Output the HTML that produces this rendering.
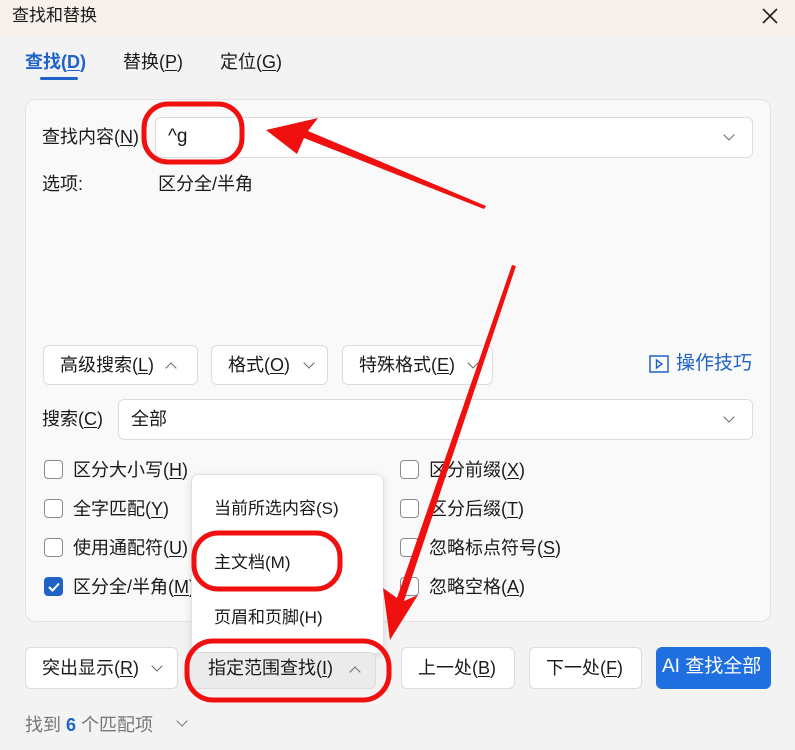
<!DOCTYPE html>
<html><head><meta charset="utf-8"><style>
*{box-sizing:border-box;margin:0;padding:0}
body{width:795px;height:750px;background:#f3f3f3;font-family:"Liberation Sans","Noto Sans CJK SC",sans-serif;color:#1a1a1a;position:relative;overflow:hidden;font-size:18px}
.a{position:absolute;white-space:nowrap}
.t{position:absolute;white-space:nowrap;line-height:20px}
.box{position:absolute;background:#fff;border:1px solid #dcdcdc;border-radius:6px}
.chev{position:absolute;width:8px;height:8px;border-right:1.5px solid #666;border-bottom:1.5px solid #666;transform:rotate(45deg)}
.up{transform:rotate(-135deg)}
.cb{position:absolute;width:19px;height:19px;border:1.5px solid #8a8a8a;border-radius:4px;background:#fff}
u{text-decoration:underline;text-underline-offset:2px}
</style></head><body>
<div class="a" style="left:0;top:0;width:795px;height:37px;background:#f7f0eb"></div>
<div class="t" style="left:12px;top:6px;font-size:17px">查找和替换</div>
<svg class="a" style="left:762px;top:8px" width="16" height="16"><path d="M1 1L15 15M15 1L1 15" stroke="#222" stroke-width="1.6"/></svg>

<div class="t" style="left:25px;top:52px;color:#1f63c9;font-weight:bold">查找(<u>D</u>)</div>
<div class="a" style="left:40px;top:77px;width:38px;height:3px;background:#1f63c9;border-radius:2px"></div>
<div class="t" style="left:123px;top:52px">替换(<u>P</u>)</div>
<div class="t" style="left:220px;top:52px">定位(<u>G</u>)</div>

<div class="a" style="left:25px;top:99px;width:746px;height:523px;background:#f9f9f9;border:1px solid #e3e3e3;border-radius:10px"></div>
<div class="t" style="left:42px;top:127px">查找内容(<u>N</u>)</div>
<div class="box" style="left:155px;top:117px;width:598px;height:41px"></div>
<div class="t" style="left:168px;top:127px;font-size:19px">^g</div>
<div class="chev" style="left:725px;top:131px"></div>
<div class="t" style="left:42px;top:174px">选项:</div>
<div class="t" style="left:158px;top:174px">区分全/半角</div>

<div class="box" style="left:43px;top:345px;width:155px;height:40px"></div>
<div class="t" style="left:60px;top:355px">高级搜索(<u>L</u>)</div>
<div class="chev up" style="left:167px;top:364px"></div>
<div class="box" style="left:211px;top:345px;width:117px;height:40px"></div>
<div class="t" style="left:228px;top:355px">格式(<u>O</u>)</div>
<div class="chev" style="left:305px;top:359px"></div>
<div class="box" style="left:342px;top:345px;width:151px;height:40px"></div>
<div class="t" style="left:359px;top:355px">特殊格式(<u>E</u>)</div>
<div class="chev" style="left:469px;top:359px"></div>
<svg class="a" style="left:649px;top:355px" width="20" height="18"><rect x="1" y="1" width="18" height="16" fill="none" stroke="#1f63c9" stroke-width="1.5"/><path d="M7.5 5L13 9L7.5 13Z" fill="none" stroke="#1f63c9" stroke-width="1.4"/></svg>
<div class="t" style="left:676px;top:354px;color:#1f63c9;font-size:19px">操作技巧</div>

<div class="t" style="left:42px;top:409px">搜索(<u>C</u>)</div>
<div class="box" style="left:118px;top:399px;width:635px;height:41px"></div>
<div class="t" style="left:131px;top:409px">全部</div>
<div class="chev" style="left:725px;top:413px"></div>

<div class="cb" style="left:44px;top:460px"></div><div class="t" style="left:73px;top:460px">区分大小写(<u>H</u>)</div>
<div class="cb" style="left:44px;top:499px"></div><div class="t" style="left:73px;top:499px">全字匹配(<u>Y</u>)</div>
<div class="cb" style="left:44px;top:538px"></div><div class="t" style="left:73px;top:538px">使用通配符(<u>U</u>)</div>
<div class="cb" style="left:44px;top:577px;background:#1f63c9;border-color:#1f63c9"></div>
<svg class="a" style="left:47px;top:581px" width="14" height="12"><path d="M2 6L5.5 9.5L12 2.5" fill="none" stroke="#fff" stroke-width="2"/></svg>
<div class="t" style="left:73px;top:577px">区分全/半角(<u>M</u>)</div>
<div class="cb" style="left:400px;top:460px"></div><div class="t" style="left:429px;top:460px">区分前缀(<u>X</u>)</div>
<div class="cb" style="left:400px;top:499px"></div><div class="t" style="left:429px;top:499px">区分后缀(<u>T</u>)</div>
<div class="cb" style="left:400px;top:538px"></div><div class="t" style="left:429px;top:538px">忽略标点符号(<u>S</u>)</div>
<div class="cb" style="left:400px;top:577px"></div><div class="t" style="left:429px;top:577px">忽略空格(<u>A</u>)</div>

<div class="a" style="left:191px;top:474px;width:193px;height:180px;background:#fff;border:1px solid #e0e0e0;border-radius:8px;box-shadow:0 2px 8px rgba(0,0,0,.12)"></div>
<div class="t" style="left:214px;top:499px;font-size:17px">当前所选内容(S)</div>
<div class="t" style="left:214px;top:553px;font-size:17px">主文档(M)</div>
<div class="t" style="left:214px;top:608px;font-size:17px">页眉和页脚(H)</div>

<div class="box" style="left:25px;top:647px;width:153px;height:42px"></div>
<div class="t" style="left:42px;top:658px">突出显示(<u>R</u>)</div>
<div class="chev" style="left:153px;top:662px"></div>
<div class="box" style="left:187px;top:652px;width:189px;height:37px;background:#ebebeb"></div>
<div class="t" style="left:208px;top:658px">指定范围查找(<u>I</u>)</div>
<div class="chev up" style="left:351px;top:668px"></div>
<div class="box" style="left:401px;top:647px;width:114px;height:42px"></div>
<div class="t" style="left:418px;top:658px">上一处(<u>B</u>)</div>
<div class="box" style="left:529px;top:647px;width:113px;height:42px"></div>
<div class="t" style="left:546px;top:658px">下一处(<u>F</u>)</div>
<div class="a" style="left:656px;top:647px;width:115px;height:42px;background:#1f6fe0;border-radius:6px"></div>
<div class="t" style="left:662px;top:657px;color:#fff;font-size:19px">AI 查找全部</div>

<div class="t" style="left:25px;top:715px;color:#777">找到 <b style="color:#1f63c9">6</b> 个匹配项</div>
<div class="chev" style="left:178px;top:717px;border-color:#777"></div>

<svg class="a" style="left:0;top:0" width="795" height="750">
<g fill="none" stroke="#f01010" stroke-width="5">
<rect x="144" y="104" width="98" height="58" rx="24"/>
<rect x="194" y="533" width="146" height="56" rx="24"/>
<rect x="187" y="641" width="202" height="59" rx="26"/>
</g>
<g fill="#f01010">
<polygon points="266,130 318,118 308,131 486,206 484,209 304,138 297,154"/>
<polygon points="390,640 383,588 397,598 512,265 516,266 404,601 418,595"/>
</g>
</svg>
</body></html>
